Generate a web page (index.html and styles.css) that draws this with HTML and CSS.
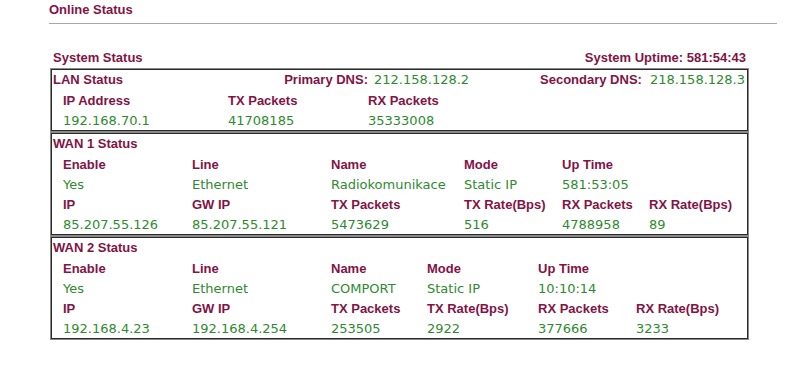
FILE: index.html
```html
<!DOCTYPE html>
<html>
<head>
<meta charset="utf-8">
<link rel="stylesheet" href="styles.css">
</head>
<body>
<div class="page">
  <div class="title">Online Status</div>
  <div class="rule"></div>
  <div class="wrap">
    <div class="sys-head">
      <span class="lbl">System Status</span>
      <span class="lbl">System Uptime: 581:54:43</span>
    </div>

    <div class="box">
      <div class="lan-head">
        <span class="lbl head-title">LAN Status</span>
        <span class="lbl">Primary DNS:</span>
        <span class="val dns1">212.158.128.2</span>
        <span class="lbl">Secondary DNS:</span>
        <span class="val dns2">218.158.128.3</span>
      </div>
      <div class="grid lan-grid">
        <span class="lbl">IP Address</span><span class="lbl">TX Packets</span><span class="lbl">RX Packets</span>
        <span class="val">192.168.70.1</span><span class="val">41708185</span><span class="val">35333008</span>
      </div>
    </div>

    <div class="box">
      <div class="box-title lbl">WAN 1 Status</div>
      <div class="grid wan1-grid">
        <span class="lbl">Enable</span><span class="lbl">Line</span><span class="lbl">Name</span><span class="lbl">Mode</span><span class="lbl">Up Time</span><span></span>
        <span class="val">Yes</span><span class="val">Ethernet</span><span class="val">Radiokomunikace</span><span class="val">Static IP</span><span class="val">581:53:05</span><span></span>
        <span class="lbl">IP</span><span class="lbl">GW IP</span><span class="lbl">TX Packets</span><span class="lbl">TX Rate(Bps)</span><span class="lbl">RX Packets</span><span class="lbl">RX Rate(Bps)</span>
        <span class="val">85.207.55.126</span><span class="val">85.207.55.121</span><span class="val">5473629</span><span class="val">516</span><span class="val">4788958</span><span class="val">89</span>
      </div>
    </div>

    <div class="box">
      <div class="box-title lbl">WAN 2 Status</div>
      <div class="grid wan2-grid">
        <span class="lbl">Enable</span><span class="lbl">Line</span><span class="lbl">Name</span><span class="lbl">Mode</span><span class="lbl">Up Time</span><span></span>
        <span class="val">Yes</span><span class="val">Ethernet</span><span class="val">COMPORT</span><span class="val">Static IP</span><span class="val">10:10:14</span><span></span>
        <span class="lbl">IP</span><span class="lbl">GW IP</span><span class="lbl">TX Packets</span><span class="lbl">TX Rate(Bps)</span><span class="lbl">RX Packets</span><span class="lbl">RX Rate(Bps)</span>
        <span class="val">192.168.4.23</span><span class="val">192.168.4.254</span><span class="val">253505</span><span class="val">2922</span><span class="val">377666</span><span class="val">3233</span>
      </div>
    </div>
  </div>
</div>
</body>
</html>
```

FILE: styles.css
```css
html, body {
  margin: 0;
  padding: 0;
  background: #ffffff;
}

.page {
  padding-left: 49px;
  font-family: "Liberation Sans", Arial, sans-serif;
}

.lbl {
  font-family: "Liberation Sans", Arial, sans-serif;
  font-weight: bold;
  font-size: 13px;
  color: #821345;
  white-space: nowrap;
}

.val {
  font-family: "DejaVu Sans", Verdana, sans-serif;
  font-size: 13px;
  color: #2f8a2f;
  white-space: nowrap;
}

.title {
  font-weight: bold;
  font-size: 13px;
  color: #821345;
  line-height: 18px;
  padding-top: 1px;
}

.rule {
  margin-top: 4px;
  width: 728px;
  height: 1px;
  background: #a8a8a8;
}

.wrap {
  width: 700px;
  margin-top: 24px;
}

.sys-head {
  display: flex;
  justify-content: space-between;
  line-height: 20px;
  padding: 0 3px 0 4px;
}

.box {
  margin-left: 1px;
  width: 699px;
  box-sizing: border-box;
  border: 1px solid #8a8a8a;
  box-shadow: inset 0 0 0 1px #2a2a2a;
  padding: 1px;
}

.lan-head {
  display: flex;
  align-items: center;
  line-height: 20px;
  padding: 0 2px 0 1px;
}

.head-title {
  flex: 1;
}

.dns1 {
  margin-left: 6px;
  width: 166px;
}

.dns2 {
  margin-left: 8px;
}

.box-title {
  display: block;
  line-height: 20px;
  padding-left: 1px;
}

.grid {
  display: grid;
  grid-auto-rows: 20px;
  align-items: center;
  padding-left: 11px;
}

.lan-grid {
  grid-template-columns: 165px 140px auto;
}

.wan1-grid {
  grid-template-columns: 129px 139px 133px 98px 87px auto;
}

.wan2-grid {
  grid-template-columns: 129px 139px 96px 111px 98px auto;
}
```
